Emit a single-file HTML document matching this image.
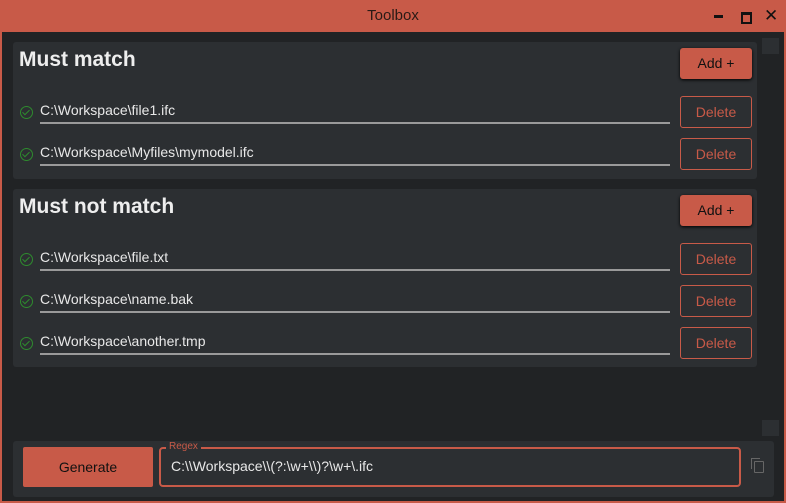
<!DOCTYPE html><html><head><style>
body{margin:0;width:786px;height:503px;overflow:hidden;font-family:"Liberation Sans",sans-serif;background:#c85a48;position:relative}
.win{position:absolute;left:2px;top:32px;width:782px;height:469px;background:#212325}
.t{position:absolute;left:0;right:0;top:0;height:32px;line-height:32px;text-align:center;color:#2a1a16;font-size:15px}
.panel{position:absolute;left:13px;width:744px;background:#2c2f32;border-radius:3px}
.h{position:absolute;left:6px;color:#eee;font-size:21px;font-weight:bold}
.add{position:absolute;left:667px;width:72px;height:31px;background:#c85a48;border-radius:3px;color:#111;font-size:14px;text-align:center;line-height:31px;box-shadow:0 1px 3px #000}
.del{position:absolute;left:667px;width:70px;height:30px;border:1px solid #c85a48;border-radius:3px;color:#c85a48;font-size:14px;text-align:center;line-height:30px}
.txt{position:absolute;left:27px;color:#e8e8e8;font-size:14px}
.ln{position:absolute;left:27px;width:630px;height:2px;background:#9a9a9a}
.ck{position:absolute;left:7px;width:11px;height:11px;border:1.5px solid #2e8b2e;border-radius:50%}
.ck:after{content:"";position:absolute;left:3px;top:1px;width:3px;height:6px;border:solid #2e8b2e;border-width:0 1.5px 1.5px 0;transform:rotate(45deg)}
</style></head><body>
<div class="t">Toolbox</div>
<div style="position:absolute;left:714px;top:15px;width:9px;height:3px;background:#111"></div>
<div style="position:absolute;left:741px;top:12px;width:7px;height:7px;border:2px solid #111;border-top-width:3px"></div>
<div style="position:absolute;left:764px;top:6px;font-size:17px;color:#111">✕</div>
<div class="win">
<div style="position:absolute;left:760px;top:6px;width:17px;height:16px;background:#2c2f32"></div>
<div style="position:absolute;left:760px;top:388px;width:17px;height:16px;background:#2c2f32"></div>
</div>
<div class="panel" style="top:42px;height:137px">
<div class="h" style="top:6px">Must match</div>
<div class="add" style="top:6px">Add +</div>
<div class="ck" style="top:64px"></div><div class="txt" style="top:60px">C:\Workspace\file1.ifc</div><div class="ln" style="top:80px"></div><div class="del" style="top:54px">Delete</div>
<div class="ck" style="top:106px"></div><div class="txt" style="top:102px">C:\Workspace\Myfiles\mymodel.ifc</div><div class="ln" style="top:122px"></div><div class="del" style="top:96px">Delete</div>
</div>
<div class="panel" style="top:189px;height:178px">
<div class="h" style="top:6px">Must not match</div>
<div class="add" style="top:6px">Add +</div>
<div class="ck" style="top:64px"></div><div class="txt" style="top:60px">C:\Workspace\file.txt</div><div class="ln" style="top:80px"></div><div class="del" style="top:54px">Delete</div>
<div class="ck" style="top:106px"></div><div class="txt" style="top:102px">C:\Workspace\name.bak</div><div class="ln" style="top:122px"></div><div class="del" style="top:96px">Delete</div>
<div class="ck" style="top:148px"></div><div class="txt" style="top:144px">C:\Workspace\another.tmp</div><div class="ln" style="top:164px"></div><div class="del" style="top:138px">Delete</div>
</div>
<div style="position:absolute;left:13px;top:441px;width:761px;height:56px;background:#2c2f32;border-radius:3px">
<div style="position:absolute;left:10px;top:6px;width:130px;height:40px;background:#c85a48;border-radius:2px;color:#111;font-size:14px;text-align:center;line-height:40px">Generate</div>
<div style="position:absolute;left:146px;top:6px;width:578px;height:36px;border:2px solid #c85a48;border-radius:4px"></div>
<div style="position:absolute;left:153px;top:0px;background:#2c2f32;color:#c85a48;font-size:10px;padding:0 3px">Regex</div>
<div style="position:absolute;left:158px;top:17px;color:#e8e8e8;font-size:14px">C:\\Workspace\\(?:\w+\\)?\w+\.ifc</div>
<div style="position:absolute;left:741px;top:20px;width:8px;height:10px;border:1.5px solid #666;border-radius:1px"></div>
<div style="position:absolute;left:738px;top:17px;width:8px;height:10px;border-left:1.5px solid #666;border-top:1.5px solid #666"></div>
</div>
</body></html>
